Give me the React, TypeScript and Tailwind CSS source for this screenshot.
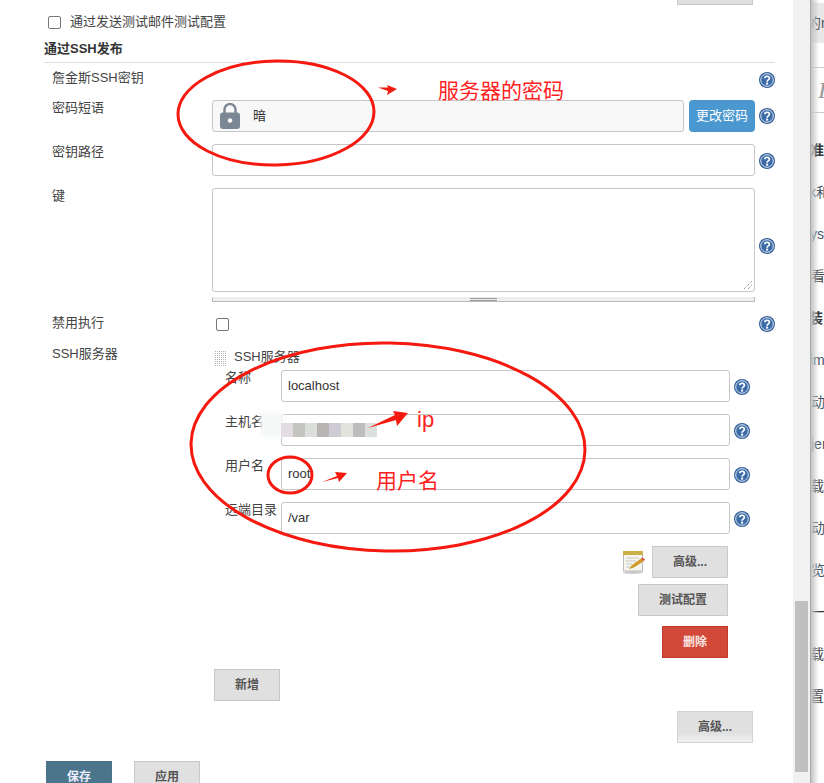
import React from 'react';

const sidebarRows = [
    { text: '准', className: 'ml-0 font-bold text-[#333]' },
    { text: 'k和', className: '-ml-[1px] text-[#456]' },
    { text: 'ys', className: 'ml-0 text-[#456]' },
    { text: '看', className: 'ml-[1px] text-[#444]' },
    { text: '装', className: '-ml-[1px] font-bold text-[#333]' },
    { text: 'im', className: 'ml-0 text-[#456]' },
    { text: '动', className: 'ml-[1px] text-[#456]' },
    { text: 'jer', className: 'ml-[1px] text-[#456]' },
    { text: '载', className: 'ml-0 text-[#444]' },
    { text: '动', className: 'ml-[1px] text-[#456]' },
    { text: '览', className: 'ml-[1px] text-[#456]' },
    { text: '一', className: 'ml-[1px] text-[#333]' },
    { text: '载', className: 'ml-0 text-[#444]' },
    { text: '置', className: 'ml-0 text-[#444]' },
];

const mosaic = ['bg-[#e3dde3]', 'bg-[#c4c4c0]', 'bg-[#dcdedb]', 'bg-[#b9b4b4]', 'bg-[#cfcbd5]', 'bg-[#e2e3dc]', 'bg-[#bdbdbd]', 'bg-[#dbe0dc]'];

function Help() {
    return (
        <svg width="16" height="16" viewBox="0 0 16 16" className="shrink-0">
            <circle cx="8" cy="8" r="8" fill="#2f5c98" />
            <circle cx="8" cy="8" r="6.3" fill="#3c6ca8" stroke="#dfe8f2" strokeWidth="1" />
            <path d="M5.8 6.3C5.8 3.6 10.4 3.6 10.4 6.2C10.4 7.9 8.1 7.9 8.1 9.7" fill="none" stroke="#fff" strokeWidth="1.7" />
            <rect x="7.1" y="10.6" width="2" height="2" fill="#fff" />
        </svg>
    );
}

function Btn({ label, className }: { label: string; className?: string }) {
    return (
        <button className={`flex h-8 shrink-0 items-center justify-center border border-[#c8c8c8] bg-[#e0e0e0] text-xs font-bold text-[#555] ${className ?? ''}`}>
            {label}
        </button>
    );
}

function Field({ value }: { value?: string }) {
    return <div className="flex h-8 items-center rounded-[3px] border border-[#c6c6c6] bg-white px-[6px] text-[13px] text-[#333]">{value}</div>;
}

function ServerRow({ label, value, children }: { label: string; value?: string; children?: React.ReactNode }) {
    return (
        <div className="grid grid-cols-[69px_449px_20px] items-center">
            <span className="self-start pl-[13px] text-[13px] leading-4 text-[#444]">{label}</span>
            <div className="relative">
                <Field value={value} />
                {children}
            </div>
            <div className="mt-[2px] justify-self-end">
                <Help />
            </div>
        </div>
    );
}

export default function App() {
    return (
        <div className="relative flex h-[783px] w-[824px] overflow-hidden bg-white font-['Liberation_Sans','Noto_Sans_CJK_SC',sans-serif] text-[13px] text-[#444]">
            <main className="flex w-[793px] shrink-0 flex-col pl-[44px] pr-[18px]">
                <div className="-mt-[27px] flex shrink-0 items-end justify-end gap-[10px] pr-[22px]">
                    <span className="mb-[30px] h-[2px] w-[15px] rounded-b-full bg-[#ddd]" />
                    <Btn label="" className="w-[76px]" />
                </div>

                <label className="mt-[9px] flex h-4 shrink-0 items-center gap-[9px] pl-1">
                    <input type="checkbox" className="size-[13px] appearance-none rounded-[2px] border border-[#777] bg-white" />
                    <span className="leading-4">通过发送测试邮件测试配置</span>
                </label>

                <h2 className="shrink-0 border-b border-[#ddd] pb-[5px] pt-[11px] text-[13px] font-bold leading-4 text-[#333]">通过SSH发布</h2>

                <div className="mt-[7px] -mb-[2px] grid h-5 shrink-0 grid-cols-[168px_543px_20px]">
                    <span className="pl-2 leading-4">詹金斯SSH密钥</span>
                    <span />
                    <div className="justify-self-end self-center">
                        <Help />
                    </div>
                </div>

                <div className="mt-3 grid shrink-0 grid-cols-[168px_543px_20px] items-center">
                    <span className="self-start pl-2 leading-4">密码短语</span>
                    <div className="flex gap-[5px]">
                        <div className="flex h-8 w-[472px] items-center gap-[13px] rounded-[3px] border border-[#c6c6c6] bg-[#f8f8f8] pl-[7px] text-[13px] text-[#333]">
                            <svg width="20" height="26" viewBox="0 0 20 26">
                                <path d="M4.5 11V6.500a5.500 5.500 0 0 1 11 0V11" fill="none" stroke="#7b8794" strokeWidth="2.400" />
                                <rect x="0" y="9.500" width="20" height="16.500" rx="3" fill="#7b8794" />
                                <circle cx="10" cy="17.500" r="2.200" fill="#fff" />
                            </svg>
                            <span>暗</span>
                        </div>
                        <button className="h-8 w-[66px] rounded-[4px] bg-[#4b98d1] text-[13px] text-white">更改密码</button>
                    </div>
                    <div className="justify-self-end">
                        <Help />
                    </div>
                </div>

                <div className="mt-3 grid shrink-0 grid-cols-[168px_543px_20px] items-center">
                    <span className="self-start pl-2 leading-4">密钥路径</span>
                    <Field />
                    <div className="mt-[2px] justify-self-end">
                        <Help />
                    </div>
                </div>

                <div className="mt-3 grid shrink-0 grid-cols-[168px_543px_20px] items-center">
                    <span className="self-start pl-2 leading-4">键</span>
                    <div className="flex flex-col">
                        <div className="relative h-[104px] rounded-[3px] border border-[#c6c6c6] bg-white">
                            <svg width="10" height="10" viewBox="0 0 10 10" className="absolute bottom-[1px] right-[1px]">
                                <path d="M1 9L9 1M5 9L9 5" stroke="#777" strokeWidth="1" strokeDasharray="1 1" />
                            </svg>
                        </div>
                        <div className="mt-[5px] flex h-[5px] items-center justify-center border-x border-b border-[#bbb] bg-[#eee]">
                            <span className="h-[3px] w-[27px] border-y border-[#999]" />
                        </div>
                    </div>
                    <div className="mt-[2px] justify-self-end">
                        <Help />
                    </div>
                </div>

                <div className="mt-3 grid h-5 shrink-0 grid-cols-[168px_543px_20px] items-center">
                    <span className="-mt-[2px] pl-2 leading-4">禁用执行</span>
                    <div>
                        <input type="checkbox" className="ml-1 block size-[13px] appearance-none rounded-[2px] border border-[#777] bg-white" />
                    </div>
                    <div className="justify-self-end">
                        <Help />
                    </div>
                </div>

                <div className="mt-3 grid shrink-0 grid-cols-[168px_563px]">
                    <span className="pl-2 leading-4">SSH服务器</span>
                    <div className="flex flex-col">
                        <div className="flex h-6 items-start gap-[7px] pl-[3px] pt-[5px]">
                            <svg width="12" height="15" className="shrink-0">
                                <defs>
                                    <pattern id="dots" width="2" height="2" patternUnits="userSpaceOnUse">
                                        <rect width="1" height="1" fill="#b4b4b4" />
                                    </pattern>
                                </defs>
                                <rect width="12" height="15" fill="url(#dots)" />
                            </svg>
                            <span className="leading-3">SSH服务器</span>
                        </div>
                        <div className="flex flex-col gap-3">
                            <ServerRow label="名称" value="localhost" />
                            <ServerRow label="主机名">
                                {/* blurred-out address in the screenshot */}
                                <div className="absolute -left-[21px] -top-[2px] h-[25px] w-[24px] bg-[#f6f8f8] blur-[2px]" />
                                <div className="absolute left-0 top-[9px] flex">
                                    {mosaic.map((c, i) => (
                                        <span key={i} className={`h-[14px] w-3 ${c}`} />
                                    ))}
                                </div>
                            </ServerRow>
                            <ServerRow label="用户名" value="root" />
                            <ServerRow label="远端目录" value="/var" />
                        </div>
                        <div className="mt-3 flex w-[516px] flex-col items-end">
                            <div className="flex items-center gap-[6px]">
                                <svg width="24" height="24" viewBox="0 0 24 24">
                                    <ellipse cx="11" cy="22.500" rx="10" ry="1.500" fill="#ccc" />
                                    <rect x="1.500" y="3" width="19" height="18" fill="#f6f6ee" stroke="#bbb" strokeWidth="1" />
                                    <rect x="1" y="1" width="20" height="4" fill="#c9b04a" />
                                    <path d="M4 8H17M4 11H14M4 14H10M4 17H9" stroke="#c4c4c4" strokeWidth="1" />
                                    <path d="M7 19L10 15L19 8.500L22 11L12 17.500Z" fill="#d09a2c" />
                                    <path d="M19 8.500L22 11L23 9.500L20.500 7.500Z" fill="#d94a35" />
                                </svg>
                                <Btn label="高级..." className="w-[76px]" />
                            </div>
                            <Btn label="测试配置" className="mt-[6px] w-[90px]" />
                            <button className="mt-[10px] h-8 w-[66px] shrink-0 border border-[#c0392b] bg-[#d24939] text-xs font-bold text-[#fbe6e3]">删除</button>
                        </div>
                        <Btn label="新增" className="ml-[2px] mt-[11px] w-[66px]" />
                    </div>
                </div>

                <div className="mt-[10px] flex shrink-0 justify-end pr-[22px]">
                    <button className="flex h-8 w-[76px] items-center justify-center border border-[#d4d4d4] bg-linear-to-b from-[#e0e0e0] from-70% to-[#f2f2f2] text-xs font-bold text-[#555]">
                        高级...
                    </button>
                </div>

                <div className="ml-[2px] mt-[18px] flex shrink-0 gap-[22px]">
                    <button className="h-8 w-[66px] border border-[#4a7287] bg-[#4b758b] text-xs font-bold text-[#eef]">保存</button>
                    <Btn label="应用" className="w-[66px]" />
                </div>
            </main>

            <div className="w-[17px] shrink-0 bg-[#f1f1f1] px-[2px] pt-[601px]">
                <div className="h-[171px] bg-[#c0c0c0]" />
            </div>

            <aside className="relative flex w-[14px] shrink-0 flex-col overflow-hidden whitespace-nowrap text-[14px]">
                <div className="mt-[3px] flex h-10 shrink-0 items-center bg-[#e8e8e8] text-[#555]">
                    <span className="-ml-[3px]">的m</span>
                </div>
                <div className="mt-[24px] flex h-[46px] shrink-0 items-center border-y border-[#ccc] pl-2 font-['Liberation_Serif'] text-[24px] italic text-[#999]">I</div>
                <div className="flex flex-col pt-[16px]">
                    {sidebarRows.map((row, i) => (
                        <div key={i} className="flex h-[42px] shrink-0 items-center">
                            <span className={row.className}>{row.text}</span>
                        </div>
                    ))}
                </div>
                <div className="absolute inset-y-0 left-0 w-[9px] border-l border-[#aaa] bg-linear-to-r from-[#c4c4c4] to-transparent" />
            </aside>

            {/* red marks someone drew on top of the screenshot */}
            <svg width="824" height="783" viewBox="0 0 824 783" className="pointer-events-none absolute left-0 top-0">
                <g fill="none" stroke="#f5190f" strokeWidth="3">
                    <ellipse cx="276" cy="113" rx="98" ry="52" transform="rotate(-1 276 113)" />
                    <ellipse cx="388" cy="447" rx="197" ry="104" transform="rotate(1 388 447)" />
                    <ellipse cx="290" cy="475" rx="22" ry="18" />
                </g>
                <g fill="#f5190f">
                    <path d="M378 87.500L388 87.500L387 85L397 89L387 95L388 91Z" />
                    <path d="M368 428L395 415L393 411L408 413L397 426L396 420Z" />
                    <path d="M322 482L337 476L335 472L347 473L339 482L338 478Z" />
                </g>
            </svg>
            <span className="absolute left-[438px] top-[78px] text-[21px] leading-[26px] text-[#ff1f1f]">服务器的密码</span>
            <span className="absolute left-[417px] top-[406px] text-[22px] leading-[28px] text-[#ff1f1f]">ip</span>
            <span className="absolute left-[376px] top-[468px] text-[21px] leading-[26px] text-[#ff1f1f]">用户名</span>
        </div>
    );
}
